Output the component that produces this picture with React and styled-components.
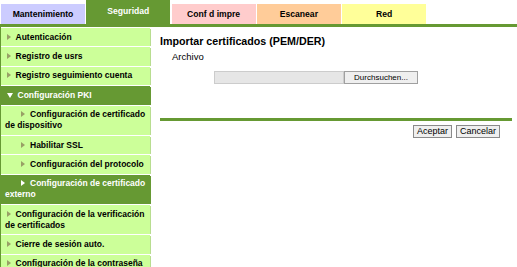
import React from "react";
import styled, { createGlobalStyle } from "styled-components";

const GlobalStyle = createGlobalStyle`
  body {
    margin: 0;
    background: #fff;
    font-family: "Liberation Sans", Arial, sans-serif;
  }
`;

const GREEN = "#669933";
const LIGHT = "#ccff99";

const tabs = [
  { label: "Mantenimiento", color: "#ccccff" },
  { label: "Seguridad", color: GREEN, active: true },
  { label: "Conf d impre", color: "#ffcccc" },
  { label: "Escanear", color: "#ffcc99" },
  { label: "Red", color: "#ffff99" },
];

const menu = [
  { label: "Autenticación" },
  { label: "Registro de usrs" },
  { label: "Registro seguimiento cuenta" },
  { label: "Configuración PKI", active: true, open: true },
  { label: "Configuración de certificado de dispositivo", sub: true },
  { label: "Habilitar SSL", sub: true },
  { label: "Configuración del protocolo", sub: true },
  { label: "Configuración de certificado externo", sub: true, active: true },
  { label: "Configuración de la verificación de certificados" },
  { label: "Cierre de sesión auto." },
  { label: "Configuración de la contraseña" },
];

const App = () => {
  return (
    <Page>
      <GlobalStyle />
      <TabBar>
        {tabs.map((t) => (
          <Tab key={t.label} $bg={t.color} $active={t.active}>
            {t.label}
          </Tab>
        ))}
      </TabBar>
      <Body>
        <Sidebar>
          {menu.map((m) => (
            <NavItem key={m.label} $active={m.active} $sub={m.sub}>
              <Arrow $open={m.open} $active={m.active} />
              {m.label}
            </NavItem>
          ))}
        </Sidebar>
        <Main>
          <Title>Importar certificados (PEM/DER)</Title>
          <FieldLabel>Archivo</FieldLabel>
          <FileRow>
            <FileField />
            <BrowseButton>Durchsuchen...</BrowseButton>
          </FileRow>
          <Divider />
          <Actions>
            <ActionButton>Aceptar</ActionButton>
            <ActionButton>Cancelar</ActionButton>
          </Actions>
        </Main>
      </Body>
    </Page>
  );
};

const Page = styled.div`
  width: 517px;
  height: 267px;
  overflow: hidden;
`;

const TabBar = styled.div`
  display: flex;
  align-items: flex-end;
  gap: 1.3px;
  height: 24px;
  padding-left: 1px;
  border-bottom: 3px solid ${GREEN};
`;

const Tab = styled.div`
  display: flex;
  align-items: center;
  justify-content: center;
  width: 84px;
  height: ${(p) => (p.$active ? "24px" : "20px")};
  padding-bottom: ${(p) => (p.$active ? "3px" : "0")};
  box-sizing: border-box;
  background: ${(p) => p.$bg};
  color: ${(p) => (p.$active ? "#fff" : "#000")};
  font-size: 8.6px;
  font-weight: bold;
`;

const Body = styled.div`
  display: flex;
`;

const Sidebar = styled.div`
  width: 150px;
  flex-shrink: 0;
  padding-top: 1px;
  border-left: 1px solid ${GREEN};
`;

const NavItem = styled.div`
  width: 149px;
  box-sizing: border-box;
  padding: 3.7px 0 3.7px 4px;
  text-indent: ${(p) => (p.$sub ? "16px" : "1.5px")};
  background: ${(p) => (p.$active ? GREEN : LIGHT)};
  color: ${(p) => (p.$active ? "#fff" : "#000")};
  border-bottom: 1px solid #fff;
  box-shadow: 2px 0 0 -1px ${(p) => (p.$active ? GREEN : "#b8dd90")};
  font-size: 8.5px;
  font-weight: bold;
  line-height: 11px;
`;

const Arrow = styled.span`
  display: inline-block;
  width: 0;
  height: 0;
  margin-right: 5px;
  vertical-align: 0;
  ${(p) =>
    p.$open
      ? `border-top: 5px solid #fff;
         border-left: 3.5px solid transparent;
         border-right: 3.5px solid transparent;`
      : `border-left: 4.5px solid ${p.$active ? "#fff" : "#99a066"};
         border-top: 3px solid transparent;
         border-bottom: 3px solid transparent;`}
`;

const Main = styled.div`
  flex: 1;
  padding: 0 5px 0 9px;
`;

const Title = styled.div`
  margin-top: 7.5px;
  font-size: 10.7px;
  font-weight: bold;
  line-height: 13px;
`;

const FieldLabel = styled.div`
  margin: 3px 0 0 12px;
  font-size: 9.5px;
  line-height: 11px;
`;

const FileRow = styled.div`
  display: flex;
  margin: 9.5px 0 0 54px;
  height: 13px;
`;

const FileField = styled.div`
  width: 130px;
  box-sizing: border-box;
  background: #e6e6e6;
  border: 1px solid #cccccc;
`;

const BrowseButton = styled.button`
  width: 74px;
  padding: 0;
  box-sizing: border-box;
  background: #efefef;
  border: 1px solid #a0a0a0;
  font-family: "Liberation Sans", Arial, sans-serif;
  font-size: 8px;
  line-height: 11px;
  color: #000;
`;

const Divider = styled.div`
  margin-top: 34px;
  height: 3px;
  background: ${GREEN};
`;

const Actions = styled.div`
  display: flex;
  justify-content: flex-end;
  gap: 4px;
  margin: 4px 12px 0 0;
`;

const ActionButton = styled.button`
  height: 13px;
  padding: 0 3px;
  background: #efefef;
  border: 1px solid #8a8a8a;
  font-family: "Liberation Sans", Arial, sans-serif;
  font-size: 9px;
  line-height: 11px;
  color: #000;
`;

export default App;
